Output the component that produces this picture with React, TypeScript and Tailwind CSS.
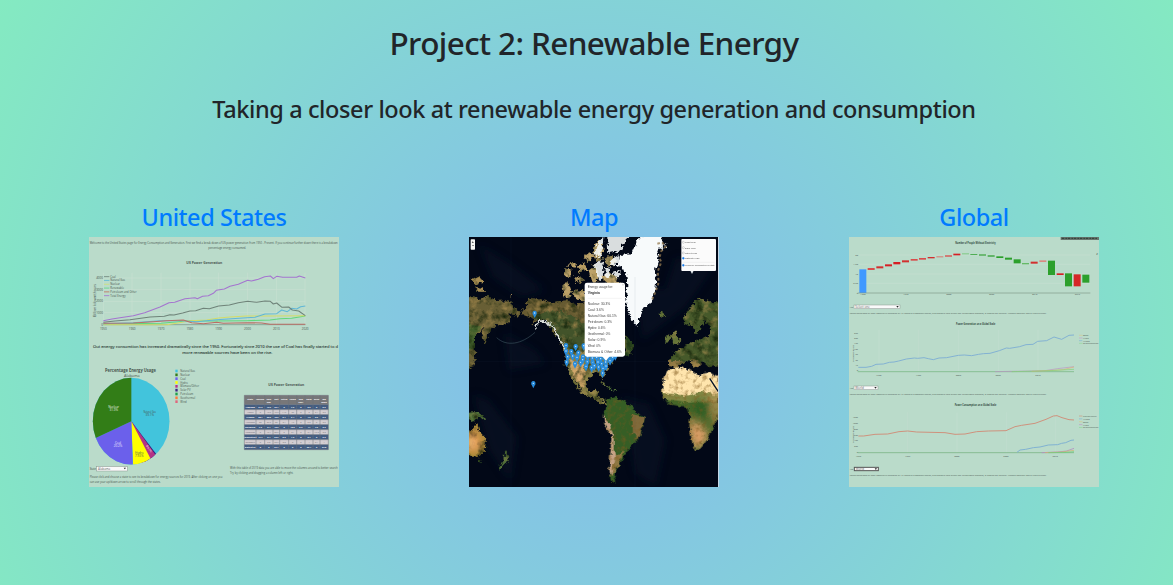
import React from "react";

type LabelProps = {
  x: number;
  y: number;
  size: number;
  width?: number;
  fill?: string;
  bold?: boolean;
  anchor?: "start" | "middle" | "end";
  children: React.ReactNode;
};

function Label({ x, y, size, width, fill = "#47544e", bold, anchor = "start", children }: LabelProps) {
  return (
    <text
      x={x}
      y={y}
      fontSize={size}
      textLength={width}
      lengthAdjust="spacingAndGlyphs"
      fill={fill}
      fontWeight={bold ? 700 : 400}
      textAnchor={anchor}
    >
      {children}
    </text>
  );
}

function Select({ x, y, w, h, text, dark }: { x: number; y: number; w: number; h: number; text: string; dark?: boolean }) {
  return (
    <g>
      <rect x={x} y={y} width={w} height={h} fill="#fafafa" stroke={dark ? "#555" : "#8d9691"} strokeWidth={dark ? 3 : 1.5} />
      <Label x={x + 4} y={y + h - 3} size={9} fill="#666">{text}</Label>
      <path d={`M${x + w - 11} ${y + 3}h7l-3.5 5z`} fill="#222" />
    </g>
  );
}

const usLegend: [string, string][] = [
  ["Coal", "#6f8279"],
  ["Natural Gas", "#5fb9d6"],
  ["Nuclear", "#cfe07a"],
  ["Renewable", "#62d987"],
  ["Petroleum and Other", "#c4705f"],
  ["Total Energy", "#a274cf"],
];

const pieLegend: [string, string][] = [
  ["Natural Gas", "#42c4de"],
  ["Nuclear", "#327d18"],
  ["Coal", "#6d62ee"],
  ["Hydro", "#ffff00"],
  ["Biomass/Other", "#b5338a"],
  ["Solar PV", "#3d2483"],
  ["Petroleum", "#20a04b"],
  ["Geothermal", "#ff7a38"],
  ["Wind", "#e0677c"],
];

const columnEdges = [493, 528, 554, 579, 599, 626, 650, 675, 699, 720, 745];
const headers = ["State", "Nuclear", "Coal", "Nat", "Petrol", "Hydro", "Geo", "Solar", "Wind", "Bio"];
const tableRows = [
  ["Alabama", "31.9", "19.6", "39.1", "0", "7.6", "0", "0.3", "0", "0.6"],
  ["Alaska", "0", "10.6", "46.9", "14.6", "26", "0", "0", "2.4", "0.6"],
  ["Arizona", "28.1", "20.5", "40.6", "0.1", "5.4", "0", "4.9", "0.5", "0.2"],
  ["Arkansas", "20", "37.6", "33", "0.1", "4.5", "0", "0.3", "0", "0.6"],
  ["California", "7.9", "0.1", "43.6", "0", "19.6", "5.6", "14", "7.5", "3.2"],
  ["Colorado", "0", "45.1", "30.6", "0", "3.1", "0", "2.1", "19.3", "0.3"],
  ["Connecticut", "41.7", "0.1", "53.6", "0.2", "1.2", "0", "0.4", "0", "2.2"],
  ["Delaware", "0", "2.3", "92.7", "0.3", "0", "0", "1", "0.1", "1"],
  ["District of", "0", "0", "67.1", "0", "0", "0", "30.1", "0", "27.8"],
];

function UnitedStatesPreview() {
  return (
    <svg viewBox="0 0 750 750" className="block h-[250px] w-[250px] bg-[#badbca]" fontFamily="'Open Sans', 'Noto Sans', sans-serif">
      <defs>
        <clipPath id="pie"><ellipse cx={153.5} cy={198.5} rx={115} ry={130} /></clipPath>
      </defs>
      <g transform="translate(-27 -21)">
        <Label x={29} y={43} size={9.5} width={744}>
          Welcome to the United States page for Energy Consumption and Generation. First we find a break down of US power generation from 1950 - Present. If you continue further down there is a breakdown
        </Label>
        <Label x={385} y={57} size={9.5} width={113}>percentage energy consumed.</Label>
        <Label x={319} y={101} size={10} width={108} bold>US Power Generation</Label>
        <path d="M70 144H676M70 179H676M70 214H676M70 248H676M70 128V284M156 128V284M243 128V284M330 128V284M416 128V284M503 128V284M589 128V284M675 128V284" stroke="#c8dfd2" strokeWidth="2" fill="none" />
        <path d="M70 284H676" stroke="#5b7468" strokeWidth="1.5" />
        {["4000", "3000", "2000", "1000", "0"].map((t, i) => (
          <Label key={t} x={69} y={148 + i * 34.7} size={9} anchor="end">{t}</Label>
        ))}
        {["1950", "1960", "1970", "1980", "1990", "2000", "2010", "2020"].map((t, i) => (
          <Label key={t} x={70 + i * 86.5} y={301} size={9} anchor="middle">{t}</Label>
        ))}
        <g transform="translate(47 260) rotate(-90)">
          <Label x={0} y={0} size={9} width={98}>Billion kilowatthours</Label>
        </g>
        {usLegend.map(([name, color], i) => (
          <g key={name}>
            <path d={`M72 ${140 + i * 11.4}h16`} stroke={color} strokeWidth="2.5" />
            <Label x={91} y={143 + i * 11.4} size={8}>{name}</Label>
          </g>
        ))}
        <g fill="none" strokeWidth="3.2" strokeLinejoin="round">
          <path d="M70 282L243 280 330 272 400 273 500 272 570 270 600 266 635 265 676 258" stroke="#61d77c" />
          <path d="M70 284H260L290 280 330 272 380 270 416 264 450 261 500 258 580 258 676 257" stroke="#d4dc67" />
          <path d="M70 281L160 278 240 272 300 272 350 275 410 269 500 263 525 262 555 252 590 251 605 240 622 245 635 235 650 237 662 230 676 228" stroke="#60b7d6" />
          <path d="M70 280L160 279 220 275 260 272 310 270 335 278 370 281 410 277 430 280 500 278 545 279 570 283H676" stroke="#bb6e64" />
          <path d="M70 277L105 273 150 269 210 261 253 259 270 254 282 255 308 249 330 243 347 242 370 235 388 236 416 228 448 225 475 218 503 214 530 217 555 213 571 214 580 222 590 219 606 232 626 231 637 240 656 243 676 257" stroke="#6f8379" />
          <path d="M70 272L96 267 120 263 160 257 194 248 240 231 267 218 284 217 315 206 345 203 352 206 368 199 385 197 400 190 409 181 433 177 450 169 475 163 503 151 514 153 535 148 554 140 571 138 580 146 590 139 608 142 650 142 658 138 676 144" stroke="#a475cf" />
        </g>
        <g fontFamily="'Noto Sans', sans-serif" stroke="#35473f" strokeWidth="0.35">
          <Label x={39} y={354} size={13} width={735} fill="#35473f">
            Out energy consumtion has increased dramatically since the 1950. Fortunately since 2010 the use of Coal has finally started to d
          </Label>
          <Label x={307} y={371} size={13} width={270} fill="#35473f">more renewable sources have been on the rise.</Label>
        </g>
      </g>
      <g transform="translate(-27 354)">
        <Label x={75} y={52} size={13} width={153} bold>Percentage Energy Usage</Label>
        <Label x={132} y={67} size={12} width={47}>Alabama</Label>
        <g clipPath="url(#pie)">
          <rect x={30} y={60} width={250} height={280} fill="#42c4dc" />
          <path d="M154 199L265 345H200Z" fill="#37217e" />
          <path d="M154 199L259 345H190Z" fill="#b43485" />
          <path d="M154 199L229 345H160Z" fill="#ffff00" />
          <path d="M154 199L159 345H20V262Z" fill="#6b60eb" />
          <path d="M154 199L20 262V50H154Z" fill="#327d17" />
        </g>
        <Label x={209} y={174} size={9} width={37} anchor="middle">Natural Gas</Label>
        <Label x={209} y={184} size={9} anchor="middle">39.1%</Label>
        <Label x={101} y={159} size={9} fill="#e7f1e2" anchor="middle">Nuclear</Label>
        <Label x={101} y={168} size={9} fill="#e7f1e2" anchor="middle">31.9%</Label>
        <Label x={114} y={266} size={9} fill="#eeeaff" anchor="middle">Coal</Label>
        <Label x={114} y={276} size={9} fill="#eeeaff" anchor="middle">20.2%</Label>
        <Label x={178} y={296} size={9} anchor="middle">Hydro</Label>
        <Label x={178} y={306} size={9} anchor="middle">7.55%</Label>
        <g transform="translate(198 272) rotate(56)"><Label x={0} y={0} size={8} fill="#fff">Bio 2%</Label></g>
        {pieLegend.map(([name, color], i) => (
          <g key={name}>
            <rect x={286} y={44 + i * 11.5} width={7} height={8} fill={color} />
            <Label x={301} y={51 + i * 11.5} size={8}>{name}</Label>
          </g>
        ))}
        <Label x={565} y={92} size={10} width={108} bold>US Power Generation</Label>
        <rect x={493} y={121} width={252} height={163} fill="#c9c4c9" />
        <rect x={493} y={121} width={252} height={28} fill="#777779" />
        {headers.map((h, i) => (
          <Label key={h} x={(columnEdges[i] + columnEdges[i + 1]) / 2} y={134} size={6.5} fill="#fff" bold anchor="middle">{h}</Label>
        ))}
        <Label x={566} y={143} size={6.5} fill="#fff" bold anchor="middle">Gas</Label>
        <Label x={662} y={143} size={6.5} fill="#fff" bold anchor="middle">Ther</Label>
        <Label x={732} y={143} size={6.5} fill="#fff" bold anchor="middle">Mass</Label>
        {tableRows.map((row, r) => (
          <g key={row[0]}>
            <rect x={493} y={149 + r * 15} width={252} height={15} fill={r % 2 ? "#d3ced2" : "#435d82"} />
            {row.map((cell, c) => (
              <Label key={c} x={(columnEdges[c] + columnEdges[c + 1]) / 2} y={159 + r * 15} size={6.5} fill={r % 2 ? "#696970" : "#fff"} bold={r % 2 === 0} anchor="middle">{cell}</Label>
            ))}
          </g>
        ))}
        <path d="M493 121V284M528 121V284M554 121V284M579 121V284M599 121V284M626 121V284M650 121V284M675 121V284M699 121V284M720 121V284M745 121V284M493 121H745M493 149H745M493 164H745M493 179H745M493 194H745M493 209H745M493 224H745M493 239H745M493 254H745M493 269H745M493 284H745" stroke="#68717a" strokeWidth="1.5" />
        <Label x={29} y={345} size={10} width={19}>State</Label>
        <Select x={50} y={335} w={92} h={13} text="Alabama" />
        <Label x={29} y={369} size={10} width={398}>Please click and choose a state to see its breakdown for energy sources for 2019. After clicking on one you</Label>
        <Label x={29} y={383} size={10} width={213}>can use your up/down arrow to scroll through the states.</Label>
        <Label x={450} y={343} size={10} width={323}>With this table of 2019 data you are able to move the columns around to better search</Label>
        <Label x={450} y={356} size={10} width={190}>Try by clicking and dragging a column left or right.</Label>
      </g>
    </svg>
  );
}

const pins: [number, number][] = [
  [197, 229], [193, 440],
  [291, 326], [320, 329], [291, 343], [307, 344], [328, 348], [344, 327], [296, 360], [311, 358], [324, 362], [342, 360],
  [293, 376], [318, 381], [335, 377], [355, 375], [371, 376], [351, 389], [368, 393], [341, 369], [356, 360], [370, 364],
  [383, 362], [395, 366], [407, 362], [418, 360], [431, 362], [439, 357], [387, 376], [398, 381], [410, 376], [423, 372],
  [376, 387], [389, 391], [402, 395], [411, 388], [401, 409],
];

const popupRows: [string, number][] = [
  ["Nuclear: 30.3%", 217], ["Coal: 3.6%", 235], ["Natural Gas: 60.1%", 252], ["Petroleum: 0.3%", 270], ["Hydro: 0.6%", 288],
  ["Geothermal: 0%", 306], ["Solar: 0.9%", 324], ["Wind: 0%", 341], ["Biomass & Other: 4.6%", 359],
];

const layerOptions: [string, number][] = [
  ["Light Map", 17], ["Dark Map", 33], ["Street Map", 49], ["Satellite Map", 65], ["US Energy Consumption per State", 86],
];

function MapPreview() {
  return (
    <svg viewBox="0 0 750 750" className="block h-[250px] w-[250px] bg-[#020817]" fontFamily="'Liberation Sans', Arial, sans-serif">
      <defs>
        <filter id="terrain" x="0" y="0" width="750" height="750" filterUnits="userSpaceOnUse" colorInterpolationFilters="sRGB">
          <feTurbulence type="fractalNoise" baseFrequency="0.08" numOctaves="3" seed="8" result="coast" />
          <feDisplacementMap in="SourceGraphic" in2="coast" scale="20" xChannelSelector="R" yChannelSelector="G" result="land" />
          <feGaussianBlur in="land" stdDeviation="1.2" result="softLand" />
          <feTurbulence type="fractalNoise" baseFrequency="0.04" numOctaves="4" seed="3" result="noise" />
          <feColorMatrix in="noise" values="0 0 0 0 0.08  0 0 0 0 0.14  0 0 0 0 0.04  2.2 0 0 0 -1" />
          <feComposite in2="softLand" operator="in" result="shade" />
          <feColorMatrix in="noise" values="0 0 0 0 0.68  0 0 0 0 0.56  0 0 0 0 0.32  0 1.8 0 0 -0.88" />
          <feComposite in2="softLand" operator="in" result="light" />
          <feMerge><feMergeNode in="softLand" /><feMergeNode in="shade" /><feMergeNode in="light" /></feMerge>
        </filter>
        <filter id="desert" x="0" y="0" width="750" height="750" filterUnits="userSpaceOnUse" colorInterpolationFilters="sRGB">
          <feTurbulence type="fractalNoise" baseFrequency="0.07" numOctaves="3" seed="2" result="noise" />
          <feDisplacementMap in="SourceGraphic" in2="noise" scale="16" xChannelSelector="R" yChannelSelector="G" result="land" />
          <feColorMatrix in="noise" values="0 0 0 0 0.5  0 0 0 0 0.35  0 0 0 0 0.12  1.4 0 0 0 -0.66" />
          <feComposite in2="land" operator="in" result="shade" />
          <feMerge><feMergeNode in="land" /><feMergeNode in="shade" /></feMerge>
        </filter>
        <filter id="ice" x="0" y="-20" width="750" height="770" filterUnits="userSpaceOnUse" colorInterpolationFilters="sRGB">
          <feTurbulence type="fractalNoise" baseFrequency="0.1" numOctaves="3" seed="5" />
          <feDisplacementMap in="SourceGraphic" scale="18" xChannelSelector="R" yChannelSelector="G" />
        </filter>
        <filter id="soft" x="-30%" y="-30%" width="160%" height="160%"><feGaussianBlur stdDeviation="12" /></filter>
        <clipPath id="africa"><path d="M598 397L633 389 663 400 683 414 718 407 750 418V530L735 570 718 604 698 631 678 641 668 610 661 565 663 535 652 508 628 507 595 500 578 470 583 430Z" /></clipPath>
        <clipPath id="australia"><path d="M0 584L10 578 24 558 33 585 50 604 48 640 28 661 0 649Z" /></clipPath>
        <clipPath id="southAmerica"><path d="M413 487L438 480 463 491 488 508 494 524 528 540 523 565 511 604 483 631 468 654 453 680 442 700 435 720 440 742 425 730 421 690 425 640 428 595 408 565 401 535 411 510Z" /></clipPath>
      </defs>
      <g fill="#07162a" opacity=".45" filter="url(#soft)">
        <path d="M30 20L125 80 230 160 160 180 70 120ZM10 470L60 490 145 600 125 735 60 640ZM500 150L590 155 620 60 730 95 650 210 520 310ZM455 480L540 500 590 610 560 750 500 710ZM105 285L200 340 230 380 120 400Z" />
      </g>
      <g filter="url(#terrain)">
        <path d="M-20 177L30 187 58 176 85 192 115 190 138 213 155 225 148 240 122 225 123 252 102 267 82 264 67 280 54 309 46 320 36 290 48 270 16 300 12 325 22 348 12 388 -20 398Z" fill="#685f35" />
        <path d="M-20 260L40 268 18 300 18 333 -20 355Z" fill="#42602c" />
        <path d="M8 128L22 119 46 132 24 142ZM20 150L43 153 48 164 22 164ZM125 174h7v6h-7z" fill="#a78d54" />
        <path d="M158 222L175 207 170 197 192 179 214 188 250 195 295 190 322 203 360 190V350L290 349 274 310 248 278 228 250 208 249 185 268 198 247 165 235Z" fill="#665a31" />
        <path d="M190 240L235 222 290 226 360 270V344L292 342 264 290 225 250Z" fill="#42532a" />
        <path d="M282 110L294 95 308 98 310 110 295 122ZM294 84L321 76 317 92ZM280 142L300 138 309 163 300 185 287 181ZM310 164L348 155V190L324 188ZM318 125L335 112 345 133 330 140ZM326 89L348 76 352 98 332 106ZM345 62L360 42 375 55 361 73ZM372 36L388 8 402 20 397 65 379 78ZM358 98L376 84 386 105 388 135 368 137ZM402 66L432 55 444 75 418 90ZM392 118L420 105 440 119 452 140 420 142Z" fill="#bda36b" />
        <path d="M468 292L480 305 495 325 489 349 466 356Z" fill="#29451f" />
        <path d="M291 345L375 345 443 350 429 376 410 401 404 430 392 411 373 409 351 433 355 465 380 458 387 466 384 481 405 489 418 507 395 499 374 484 340 470 332 449 315 425 337 466 315 442 300 402 287 387Z" fill="#847d43" />
        <path d="M301 365L340 380 351 414 342 453 315 422Z" fill="#d0a66b" />
        <path d="M399 438L426 454M428 457l15 2" stroke="#527239" strokeWidth="5" />
        <path d="M602 307L620 276 626 302 639 317 613 323 610 304ZM590 300L603 292 602 313 589 314ZM566 228L582 224 589 236 574 240Z" fill="#657439" />
        <path d="M643 246L657 220 690 184 716 192 770 202V380L720 391 698 372 679 385 660 370 637 380 608 382 601 372 614 350 635 333 665 319 690 308 720 300 723 270 708 251 680 292 668 260 652 267Z" fill="#46592a" />
        <path d="M600 371L638 372 628 390 600 388ZM661 366L674 390 686 394 695 378" fill="#917944" />
        <path d="M-10 528L26 525 57 548 45 548 25 540 17 558 0 546ZM24 669L37 668 35 677ZM108 643L121 659 108 681 96 695 89 690 107 668Z" fill="#527139" />
        <path d="M-10 584L10 578 24 558 33 585 50 604 48 640 28 661 -10 649Z" fill="#a88a3a" />
      </g>
      <g filter="url(#desert)">
        <path d="M413 487L438 480 463 491 488 508 494 524 528 540 523 565 511 604 483 631 468 654 453 680 442 700 435 720 440 742 425 730 421 690 425 640 428 595 408 565 401 535 411 510Z" fill="#365e25" />
        <g clipPath="url(#southAmerica)">
          <path d="M398 533L421 560 434 596 434 640 445 686 420 720Z" fill="#c5a284" />
          <path d="M490 532L528 540 510 605 492 590Z" fill="#806a3b" />
          <path d="M438 656L465 640 449 686 425 718Z" fill="#8f7742" />
        </g>
        <g clipPath="url(#africa)">
          <rect x={570} y={380} width={200} height={270} fill="#456628" />
          <path d="M570 385H770V475L725 470 695 465 650 477 580 468Z" fill="#ffe5ad" />
          <path d="M570 466L650 476 700 465 770 474V492L650 498 570 485Z" fill="#9d9650" opacity=".7" />
          <g filter="url(#soft)">
            <path d="M655 545L705 570 720 600 683 643 665 620Z" fill="#dd9e66" />
            <path d="M725 480L750 460V565L735 560Z" fill="#c49a5c" />
            <path d="M670 490L720 500 715 545 672 530Z" fill="#2b5c20" />
          </g>
        </g>
      </g>
      <path d="M722 424L736 446 748 464" fill="none" stroke="#061226" strokeWidth="4" />
      <g clipPath="url(#australia)" filter="url(#soft)" opacity=".9"><path d="M0 580L28 593 34 630 0 650Z" fill="#ff8c3c" /><circle cx="7" cy="616" r="16" fill="#ffca90" /></g>
      <g filter="url(#ice)" fill="#f7fafb">
        <path d="M457 54L490 47 506 10 525 -12 570 -12 582 20 565 39 569 65 557 103 562 130 558 160 548 194 527 211 514 231 505 267 490 251 477 222 469 190 475 150 473 119 463 93 443 86Z" />
        <path d="M385 21L405 -10 396 62 376 53ZM414 -10L490 -10 460 21 461 39 418 49ZM427 67L453 52 450 77 423 85ZM375 82L405 70 401 119 392 133ZM410 94L424 91 420 126 409 123ZM427 108L452 98 450 127ZM571 22L592 19 582 44Z" opacity=".88" />
      </g>
      <path d="M565 20L579 16 590 28 577 42 571 63 577 75 566 104 569 136 560 163 549 188" fill="none" stroke="#967b51" strokeWidth="6" strokeDasharray="8 7" opacity=".75" />
      <path d="M83 302C113 330 158 322 198 286" fill="none" stroke="#4a646e" strokeWidth="2.5" opacity=".6" />
      <path d="M197 278L209 251 227 254 253 270 276 315 292 340" fill="none" stroke="#d9ddd9" strokeWidth="5" filter="url(#ice)" />
      <path d="M126 0V750M498 120V750M0 373H750" stroke="#40566b" strokeWidth="1" opacity=".25" />
      {pins.map(([x, y]) => (
        <g key={`${x}-${y}`}>
          <path d={`M${x} ${y + 14}L${x - 6} ${y + 2}Q${x - 8} ${y - 7} ${x} ${y - 8}Q${x + 8} ${y - 7} ${x + 6} ${y + 2}Z`} fill="#288cdd" />
          <circle cx={x} cy={y - 1} r="2" fill="#d7f0ff" />
        </g>
      ))}
      <rect x={5} y={7} width={13} height={31} rx={2} fill="#f7f7f5" />
      <Label x={8} y={18} size={11} fill="#222" bold>+</Label>
      <Label x={9} y={31} size={11} fill="#222" bold>−</Label>
      <path d="M398 356L411 371 423 356Z" fill="#fff" />
      <rect x={347} y={137} width={121} height={222} rx={7} fill="#fff" />
      <Label x={356} y={154} size={11} width={76} fill="#444">Energy usage for:</Label>
      <Label x={356} y={172} size={11} width={37} fill="#333" bold>Virginia</Label>
      <path d="M356 184H459" stroke="#ddd" strokeWidth="1" />
      {popupRows.map(([text, y]) => (
        <Label key={text} x={356} y={y - 12} size={11} fill="#444" width={text.length * 4.85}>{text}</Label>
      ))}
      <Label x={459} y={146} size={9} fill="#999">×</Label>
      <path d="M663 99L669 111 675 99" fill="#e8edf0" />
      <rect x={637} y={6} width={104} height={96} rx={3} fill="#fbfbfb" />
      <path d="M642 76H736" stroke="#ddd" />
      {layerOptions.map(([text, y], i) => (
        <g key={text}>
          <circle cx={643} cy={y - 1} r="3" fill={i > 2 ? "#177bea" : "#fff"} stroke={i > 2 ? "#177bea" : "#8b8b8b"} />
          <Label x={648} y={y + 2} size={7.5} fill="#555" width={i === 4 ? 89 : undefined}>{text}</Label>
        </g>
      ))}
      <path d="M748.5 0V750" stroke="#c5d7e7" strokeWidth="3" />
    </svg>
  );
}

const bars: [number, number, number, string][] = [
  [43, 109, 71, "#4099ff"], [68, 105, 6, "#d94c4b"], [94, 100, 6, "#d22f2f"], [120, 94, 6, "#d51f24"], [145, 87, 7, "#d51f24"],
  [171, 82, 6, "#d22f2f"], [197, 78, 5, "#d94c4b"], [222, 75, 5, "#d94c4b"], [248, 72, 4, "#d22f2f"], [274, 70, 3, "#d87a71"],
  [300, 67, 4, "#d94c4b"], [325, 62, 5, "#d51f24"], [351, 61, 3, "#80c984"], [376, 63, 3, "#50ae55"], [402, 64, 4, "#45a849"],
  [428, 67, 4, "#36a13a"], [454, 70, 5, "#2ca02c"], [480, 74, 6, "#2ca02c"], [506, 79, 12, "#2ca02c"], [531, 90, 4, "#66b968"],
  [557, 86, 6, "#d22f2f"], [583, 82, 5, "#db8982"], [609, 83, 43, "#2ca02c"], [635, 121, 5, "#d51f24"], [660, 121, 39, "#2ca02c"],
  [686, 124, 36, "#d62728"], [712, 125, 24, "#2ca02c"],
];

const lorem =
  "Lorem ipsum dolor sit amet consectetur adipiscing elit. Ut convallis ullamcorper sapien, vitae molestie risus feugiat sed. Pellentesque dignissim, at egestas nisi tincidunt. Vivamus imperdiet mattis turpis pulvinar";

function GlobalPreview() {
  return (
    <svg viewBox="0 0 750 750" className="block h-[250px] w-[250px] bg-[#badbca]" fontFamily="'Open Sans', 'Noto Sans', sans-serif">
      <g transform="translate(-12 -12)">
        <rect x={647} y={12} width={115} height={9} fill="#68766f" />
        <path d="M650 16h108" stroke="#36453d" strokeWidth="4" strokeDasharray="8 3 5 2" />
        <Label x={331} y={33} size={9} width={121} bold fill="#304a3e">Number of People Without Electricity</Label>
        <Label x={754} y={66} size={10} fill="#36554a">z</Label>
        <path d="M42 66H736M42 94H736M42 123H736M42 151H736" stroke="#c8dfd2" strokeWidth="1.5" />
        {["2B", "1.5B", "1B", "0.5B", "0"].map((t, i) => <Label key={t} x={39} y={69 + i * 28.2} size={7} anchor="end">{t}</Label>)}
        {bars.map(([x, y, h, color]) => <rect key={x} x={x} y={y} width={21} height={h} fill={color} />)}
        <path d="M38 180H736" stroke="#80998a" strokeWidth="2" />
        {["1990", "1995", "2000", "2005", "2010", "2015"].map((t, i) => <Label key={t} x={54 + i * 128.7} y={187} size={7} anchor="middle">{t}</Label>)}
        <Label x={14} y={225} size={7} width={11}>Year</Label>
        <Select x={27} y={216} w={138} h={11} text="Select one" />
        <Label x={14} y={243} size={7.5} width={589}>{lorem}</Label>
        <Label x={333} y={276} size={9} width={118} bold fill="#304a3e">Power Generation on a Global Scale</Label>
        <path d="M102 290V414M221 290V414M340 290V414M460 290V414M579 290V414" stroke="#c5ddd0" strokeWidth="1.5" />
        {["25k", "20k", "15k", "10k", "5k", "2k", "1k", "0"].map((t, i) => <Label key={t} x={39} y={302 + i * 16.2} size={7} anchor="end">{t}</Label>)}
        <g transform="translate(27 386) rotate(-90)"><Label x={0} y={0} size={7}>Terawatt-hours</Label></g>
        {["Solar", "Wind", "Hydro", "Bio and geothermal"].map((t, i) => (
          <g key={t}>
            <path d={`M702 ${307 + i * 8}h10`} stroke={["#d8c993", "#c59dcb", "#83b7d5", "#8ed99a"][i]} strokeWidth="2" />
            <Label x={714} y={310 + i * 8} size={7} width={i === 3 ? 46 : undefined}>{t}</Label>
          </g>
        ))}
        <path d="M40 403H63L80 400 93 394 115 393 133 388 147 387 161 384 184 378 208 375 218 376 237 374 250 377 265 380 282 375 305 374 340 367 358 366 380 368 401 364 415 362 435 361 463 353 484 345 494 346 524 341 543 335 564 334 578 325 605 323 627 312 650 319 672 307 687 306" fill="none" stroke="#83b2d3" strokeWidth="3" />
      </g>
      <g transform="translate(-12 369)">
        <path d="M38 35H687" stroke="#70b27a" strokeWidth="2" />
        <path d="M450 35L600 32 637 26 687 20" fill="none" stroke="#b995c4" strokeWidth="2" />
        <path d="M560 34L625 31 655 29 687 21" fill="none" stroke="#ddb273" strokeWidth="2" />
        <path d="M500 35L615 32 687 28" fill="none" stroke="#7ed574" strokeWidth="2" />
        {["1990", "1995", "2000", "2005", "2010"].map((t, i) => <Label key={t} x={101 + i * 119.5} y={48} size={7} anchor="middle">{t}</Label>)}
        <Label x={14} y={87} size={7} width={11}>Year</Label>
        <Select x={27} y={78} w={72} h={11} text="World" />
        <Label x={14} y={106} size={7.5} width={589}>{lorem}</Label>
        <Label x={329} y={138} size={9} width={125} bold fill="#304a3e">Power Consumption on a Global Scale</Label>
        <path d="M188 157V278M336 157V278M484 157V278M631 157V278" stroke="#c5ddd0" strokeWidth="1.5" />
        {["120k", "100k", "80k", "60k", "40k", "20k", "0"].map((t, i) => <Label key={t} x={39} y={174 + i * 17.6} size={7} anchor="end">{t}</Label>)}
        <g transform="translate(27 248) rotate(-90)"><Label x={0} y={0} size={7}>Terawatt-hours</Label></g>
        <path d="M40 228H56L90 223 128 222 162 215 188 213 215 216 300 218 330 223 360 222 395 215 430 213 483 212 510 200 530 196 570 190 603 178 625 168 636 167 651 173 672 179 687 180" fill="none" stroke="#cf927d" strokeWidth="3" />
        <path d="M38 278H687" stroke="#6fac78" strokeWidth="2" />
        <path d="M516 277L525 270 542 268 565 263 585 261 610 255 638 254 650 250 662 248 678 241 687 240" fill="none" stroke="#80b2d2" strokeWidth="3" />
        <path d="M590 278L637 276 665 273 687 265" fill="none" stroke="#b590bf" strokeWidth="2.5" />
        <path d="M600 278L650 276 687 271" fill="none" stroke="#d5b169" strokeWidth="2" />
        <path d="M610 278L665 277 687 275" fill="none" stroke="#68d276" strokeWidth="2" />
        {["1990", "1995", "2000", "2005", "2010"].map((t, i) => <Label key={t} x={40 + i * 147.7} y={291} size={7} anchor="middle">{t}</Label>)}
        {["Traditional Biofuels", "Hydro", "Solar", "Wind", "Bio and geothermal"].map((t, i) => (
          <g key={t}>
            <path d={`M702 ${168 + i * 8.6}h10`} stroke={["#d1947f", "#82b5d4", "#d8c68a", "#bf99c7", "#89d998"][i]} strokeWidth="2" />
            <Label x={714} y={171 + i * 8.6} size={7} width={i === 4 ? 46 : i === 0 ? 40 : undefined}>{t}</Label>
          </g>
        ))}
        <Label x={14} y={330} size={7} width={11}>Year</Label>
        <Select x={28} y={322} w={72} h={10} text="World" dark />
        <Label x={14} y={348} size={7.5} width={589}>{lorem}</Label>
      </g>
    </svg>
  );
}

function PreviewLink({ title, children }: { title: string; children: React.ReactNode }) {
  return (
    <a href="#" className="flex flex-col items-center text-[#007bff]">
      <h2 className="mb-[5px] text-[23.5px] leading-[29px] font-medium tracking-[-0.45px] whitespace-nowrap">{title}</h2>
      {children}
    </a>
  );
}

export default function App() {
  return (
    <main className="h-[585px] overflow-hidden bg-[radial-gradient(circle_at_594px_349px,#84baee_0%,#84eac1_100%)] pt-6 pl-6 font-['Noto_Sans','Open_Sans',sans-serif] text-[#212529]">
      <div className="w-[1140px]">
        <header className="flex flex-col items-center">
          <h1 className="text-[31.5px] leading-[38px] font-medium tracking-[-0.62px] whitespace-nowrap">Project 2: Renewable Energy</h1>
          <p className="mt-[33px] text-[23.5px] leading-[29px] font-medium tracking-[-0.4px] whitespace-nowrap">
            Taking a closer look at renewable energy generation and consumption
          </p>
        </header>
        <section className="mt-[79px] grid grid-cols-3">
          <PreviewLink title="United States"><UnitedStatesPreview /></PreviewLink>
          <PreviewLink title="Map"><MapPreview /></PreviewLink>
          <PreviewLink title="Global"><GlobalPreview /></PreviewLink>
        </section>
      </div>
    </main>
  );
}
